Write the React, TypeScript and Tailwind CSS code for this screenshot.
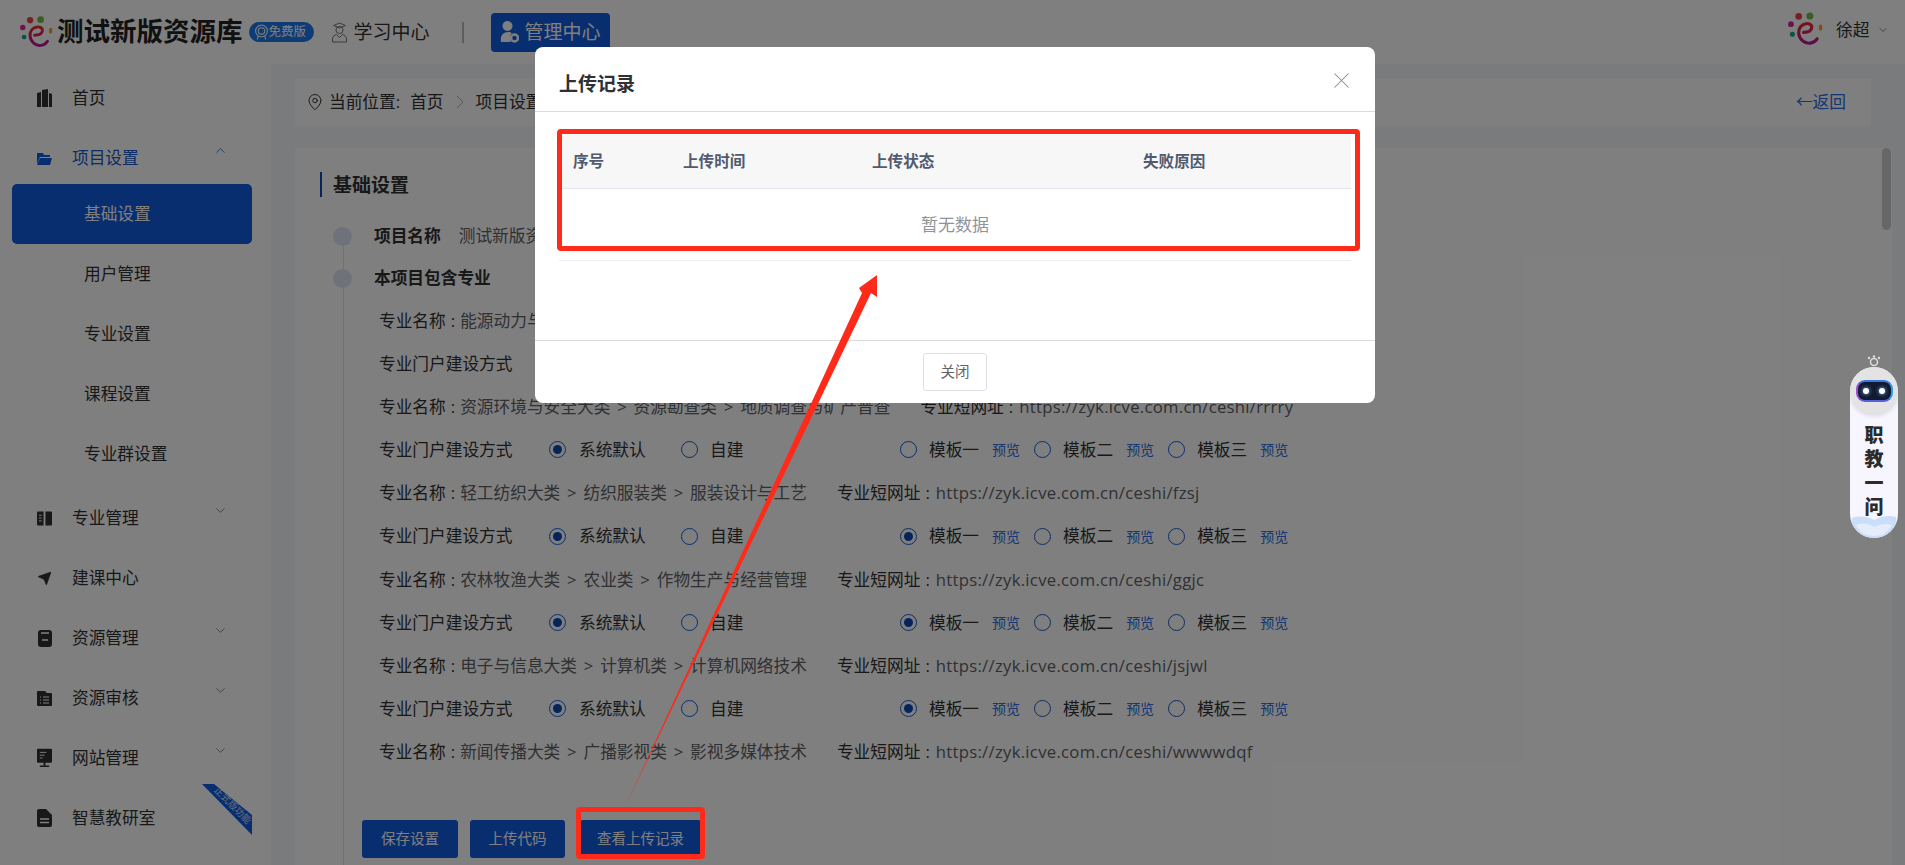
import React from 'react';
import { ChevronDown, ChevronUp, ChevronRight, MapPin, X, Send } from 'lucide-react';

const FONT = "font-['Open_Sans','Noto_Sans_CJK_SC',sans-serif]";

function Logo({ size }: { size: number }) {
    return (
        <svg width={size} height={size} viewBox="0 0 36 36" className="shrink-0">
            <defs>
                <linearGradient id="swirl" x1="0" y1="0" x2="0" y2="1">
                    <stop offset="0" stopColor="#f0282d" />
                    <stop offset="1" stopColor="#b5189a" />
                </linearGradient>
            </defs>
            <circle cx="11" cy="4.500" r="3.400" fill="#e8433f" />
            <circle cx="22.500" cy="4" r="3.600" fill="#7ab648" />
            <circle cx="3" cy="12.500" r="3" fill="#d92b8a" />
            <circle cx="4.500" cy="23" r="2.600" fill="#12a98c" />
            <ellipse cx="33.500" cy="16" rx="1.800" ry="3.200" fill="#f0a01e" />
            <path d="M16 21c4 0 8-1.500 8.500-5 .3-3-3-4.500-6-4-5 .8-8 5-7.500 10 .6 6 6 11 12 10 3-.5 5.500-2 7-4.500" stroke="url(#swirl)" strokeWidth="3.200" fill="none" strokeLinecap="round" />
        </svg>
    );
}

function SideItem({ icon, label, open, active }: { icon: React.ReactNode, label: string, open?: boolean, active?: boolean }) {
    return (
        <div className="relative flex items-center h-[60px] pl-[37px] shrink-0">
            <span className={`w-[15px] flex justify-center ${active ? 'text-[#105ce0]' : 'text-[#303133]'}`}>{icon}</span>
            <span className={`ml-[20px] text-[16.7px] ${active ? 'text-[#1a57c8]' : 'text-[#303133]'}`}>{label}</span>
            {open === true && <ChevronUp className="absolute left-[213px] top-[15px] w-[15px] h-[15px] text-[#1a57c8]" strokeWidth={1.2} />}
            {open === false && <ChevronDown className="absolute left-[213px] top-[15px] w-[15px] h-[15px] text-[#606266]" strokeWidth={1.2} />}
        </div>
    );
}

function SubItem({ label, active }: { label: string, active?: boolean }) {
    return (
        <div className={`h-[60px] mx-[12px] w-[240px] rounded-[5px] flex items-center pl-[72px] text-[16.7px] shrink-0 ${active ? 'bg-[#105ce0] text-white' : 'text-[#303133]'}`}>
            {label}
        </div>
    );
}

function Radio({ on }: { on?: boolean }) {
    return (
        <span className={`w-[17px] h-[17px] rounded-full border border-[#155bd4] flex items-center justify-center shrink-0 ${on ? 'border-[#1a6fd8]' : ''}`}>
            {on && <span className="w-[9px] h-[9px] rounded-full bg-[#0a48b8]" />}
        </span>
    );
}

function NameRow({ path, url }: { path: string, url: string }) {
    return (
        <div className="h-[43.1px] flex items-center pl-[379px] text-[16.7px] whitespace-nowrap shrink-0">
            <span className="text-[#303133]">专业名称</span>
            <span className="text-[#303133] ml-[5px] mr-[5px]">:</span>
            <span className="text-[#606266] [word-spacing:2.5px]">{path}</span>
            <span className="text-[#303133] ml-[30px]">专业短网址</span>
            <span className="text-[#303133] ml-[5px] mr-[6px]">:</span>
            <span className="text-[#606266] tracking-[0.28px]">{url}</span>
        </div>
    );
}

function TemplateOption({ label, on, first }: { label: string, on?: boolean, first?: boolean }) {
    return (
        <div className={`flex items-center ${first ? '' : 'ml-[14px]'}`}>
            <Radio on={on} />
            <span className="ml-[12px] text-[#303133]">{label}</span>
            <span className="ml-[13px] text-[14px] text-[#2a6de0]">预览</span>
        </div>
    );
}

function DoorRow({ tpl }: { tpl?: boolean }) {
    return (
        <div className="h-[43.1px] flex items-center pl-[379px] text-[16.7px] text-[#303133] whitespace-nowrap shrink-0">
            <span className="w-[170px]">专业门户建设方式</span>
            <div className="flex items-center w-[132px]">
                <Radio on />
                <span className="ml-[13px]">系统默认</span>
            </div>
            <div className="flex items-center w-[219px]">
                <Radio />
                <span className="ml-[12px]">自建</span>
            </div>
            <TemplateOption label="模板一" on={tpl} first />
            <TemplateOption label="模板二" />
            <TemplateOption label="模板三" />
        </div>
    );
}

function Mascot() {
    return (
        <div className="absolute left-[1850px] top-[355px] w-[48px] h-[183px] z-30">
            <svg width="16" height="12" viewBox="0 0 16 12" className="absolute left-[16px] top-0">
                <circle cx="8" cy="7" r="3.500" fill="none" stroke="#ddd" strokeWidth="1.500" />
                <circle cx="3" cy="3" r="1.200" fill="#ddd" />
                <circle cx="8" cy="1.500" r="1.200" fill="#ddd" />
                <circle cx="13" cy="3" r="1.200" fill="#ddd" />
            </svg>
            <div className="absolute left-0 top-[12px] w-[48px] h-[171px] rounded-full bg-[#f7f6fe] overflow-hidden flex flex-col items-center">
                <div className="w-[48px] h-[47px] rounded-full bg-[#e3e3e3] flex items-center justify-center shrink-0 shadow-[0_2px_4px_rgba(0,0,0,0.12)]">
                    <div className="w-[37px] h-[22px] rounded-[9px] bg-[#101a30] border-2 border-l-[#9b4fd0] border-r-[#2d9be0] border-t-[#3a78e0] border-b-[#5a60d8] flex items-center justify-center gap-[10px]">
                        <span className="w-[6px] h-[6px] rounded-full bg-white shadow-[0_0_4px_#9cc8ff]" />
                        <span className="w-[6px] h-[6px] rounded-full bg-white shadow-[0_0_4px_#9cc8ff]" />
                    </div>
                </div>
                <div className="flex flex-col items-center text-[19px] font-black text-[#2b2b2b] leading-[24px] mt-[9px] relative z-10">
                    <span>职</span>
                    <span>教</span>
                    <span>一</span>
                    <span>问</span>
                </div>
                <svg width="48" height="26" viewBox="0 0 48 26" className="absolute left-0 bottom-0">
                    <path d="M2 6c8-3 16-1 22 2 7-4 14-5 22-3 1 8-3 21-22 21S1 14 2 6z" fill="#c9def9" />
                    <path d="M6 13c8-3 13-1 18 2 6-3 12-4 18-2-4 8-10 11-18 11S10 21 6 13z" fill="#e5ecfc" />
                </svg>
            </div>
        </div>
    );
}

export default function App() {
    return (
        <div className={`relative w-[1905px] h-[865px] overflow-hidden bg-[#f4f6f9] ${FONT}`}>
            {/* top bar */}
            <div className="h-[64px] bg-white flex items-center pl-[20px] relative">
                <Logo size={33} />
                <span className="ml-[4px] text-[26.5px] font-bold text-[#222] whitespace-nowrap">测试新版资源库</span>
                <span className="ml-[6px] w-[65px] h-[20px] rounded-full bg-[#1f78e8] flex items-center pl-[5px] text-white whitespace-nowrap">
                    <svg width="15" height="18" viewBox="0 0 14 16" fill="none" stroke="white" strokeWidth="1"><circle cx="7" cy="7" r="5.500" /><circle cx="7" cy="7" r="3" /><path d="M4 12l-1 3M10 12l1 3" /></svg>
                    <span className="text-[12.5px]">免费版</span>
                </span>
                <svg width="17" height="21" viewBox="0 0 17 21" fill="none" stroke="#777" strokeWidth="1" className="ml-[17px]">
                    <path d="M8.500 1l6 2.500-6 2.500-6-2.500z" />
                    <circle cx="8.500" cy="8" r="3.600" />
                    <path d="M1.500 20v-3c0-2.500 2-4 4-4.500l3 3 3-3c2 .5 4 2 4 4.500v3z" />
                </svg>
                <span className="ml-[6px] text-[19px] text-[#333]">学习中心</span>
                <span className="ml-[32px] w-[2px] h-[21px] bg-[#bbb]" />
                <div className="ml-[27px] w-[119px] h-[39px] rounded-[4px] bg-[#105ce0] flex items-center pl-[9px] text-[19px] text-white whitespace-nowrap">
                    <svg width="19" height="24" viewBox="0 0 19 24" fill="white">
                        <circle cx="7.500" cy="6" r="5" />
                        <path d="M1 22c-1-6 2-10 7-10 1.500 0 3 .5 4 1-2 2-3 5-1 9z" />
                        <circle cx="14.500" cy="18" r="3.500" fill="none" stroke="white" strokeWidth="2.500" />
                    </svg>
                    <span className="ml-[6px]">管理中心</span>
                </div>
                <div className="absolute left-[1788px] top-[12px] flex items-center">
                    <Logo size={35} />
                    <span className="ml-[13px] text-[16.7px] text-[#303133]">徐超</span>
                    <ChevronDown className="ml-[8px] w-[12px] h-[12px] text-[#606266]" strokeWidth={1.5} />
                </div>
            </div>

            <div className="flex h-[801px]">
                {/* left menu */}
                <div className="w-[271px] bg-white shrink-0 flex flex-col overflow-hidden">
                    <div className="h-[4px] shrink-0" />
                    <SideItem
                        label="首页"
                        icon={<svg width="15" height="18" viewBox="0 0 15 18" fill="currentColor"><path d="M0 4l4-1v15H0zM5 1l6-1v18H5zM12 4l3 1v13h-3z" /></svg>}
                    />
                    <SideItem
                        label="项目设置"
                        open={true}
                        active
                        icon={<svg width="15" height="13" viewBox="0 0 15 13" fill="currentColor"><path d="M0 1h6l1 2h6v2H3L0 12zM3 6h12l-2 7H0z" /></svg>}
                    />
                    <div className="-mt-[4px] mb-[4px] flex flex-col shrink-0">
                        <SubItem label="基础设置" active />
                        <SubItem label="用户管理" />
                        <SubItem label="专业设置" />
                        <SubItem label="课程设置" />
                        <SubItem label="专业群设置" />
                    </div>
                    <SideItem
                        label="专业管理"
                        open={false}
                        icon={
                            <svg width="16" height="17" viewBox="0 0 16 17">
                                <path d="M1 1h6v15H1a1 1 0 01-1-1V2a1 1 0 011-1zM9 1h6a1 1 0 011 1v13a1 1 0 01-1 1H9z" fill="currentColor" />
                                <path d="M2 5h3M2 8h3M2 11h3" stroke="#fff" strokeWidth="1" />
                            </svg>
                        }
                    />
                    <SideItem label="建课中心" icon={<Send className="w-[19px] h-[19px] fill-current" strokeWidth={1} />} />
                    <SideItem
                        label="资源管理"
                        open={false}
                        icon={
                            <svg width="14" height="17" viewBox="0 0 14 17">
                                <path d="M3 0h8a3 3 0 013 3v11a3 3 0 01-3 3H3a3 3 0 01-3-3V3a3 3 0 013-3z" fill="currentColor" />
                                <path d="M3 3h8M4 10h6" stroke="#fff" strokeWidth="1.500" />
                            </svg>
                        }
                    />
                    <SideItem
                        label="资源审核"
                        open={false}
                        icon={
                            <svg width="15" height="15" viewBox="0 0 15 15">
                                <path d="M1 0h7l2 2h4a1 1 0 011 1v11a1 1 0 01-1 1H1a1 1 0 01-1-1V1a1 1 0 011-1z" fill="currentColor" />
                                <path d="M3 6h1M6 6h6M3 9h1M6 9h6M3 12h1M6 12h6" stroke="#fff" strokeWidth="1" />
                            </svg>
                        }
                    />
                    <SideItem
                        label="网站管理"
                        open={false}
                        icon={
                            <svg width="16" height="20" viewBox="0 0 16 20">
                                <path d="M1 0h14a1 1 0 011 1v13a1 1 0 01-1 1H1a1 1 0 01-1-1V1a1 1 0 011-1zM7 15h2v3h4v1.500H3V18h4z" fill="currentColor" />
                                <path d="M3 4h7M3 7h5M3 10h3" stroke="#fff" strokeWidth="1" />
                            </svg>
                        }
                    />
                    <SideItem
                        label="智慧教研室"
                        icon={
                            <svg width="15" height="18" viewBox="0 0 15 18">
                                <path d="M2 0h7l6 6v10a2 2 0 01-2 2H2a2 2 0 01-2-2V2a2 2 0 012-2z" fill="currentColor" />
                                <path d="M3 10h9M3 13.500h9" stroke="#fff" strokeWidth="1.500" />
                            </svg>
                        }
                    />
                </div>

                {/* right side */}
                <div className="flex-1 pl-[24px] pr-[34px] pt-[14px] flex flex-col">
                    <div className="h-[48px] bg-white rounded-[2px] flex items-center pl-[11px] text-[16.7px] text-[#303133] whitespace-nowrap shrink-0 relative">
                        <MapPin className="w-[18px] h-[20px]" strokeWidth={1.3} />
                        <span className="ml-[5px]">当前位置:</span>
                        <span className="ml-[10px]">首页</span>
                        <ChevronRight className="ml-[4px] w-[24px] h-[24px] text-[#999]" strokeWidth={0.8} />
                        <span className="ml-[4px]">项目设置</span>
                        <span className="ml-auto mr-[25px] text-[#2a6de0] font-['Noto_Sans_CJK_SC',sans-serif]">←返回</span>
                    </div>
                    <div className="mt-[22px] -mr-[21px] flex-1 bg-white rounded-t-[2px] relative min-h-0">
                        <div className="absolute left-[25px] top-[24px] h-[25px] w-[2px] bg-[#0a48b8]" />
                        <div className="pl-[38px] pt-[24px] text-[19px] font-bold text-[#303133] leading-[27px]">基础设置</div>
                    </div>
                </div>
            </div>

            {/* page content of the settings card */}
            <div className="absolute left-0 top-[215px] w-[1905px]">
                <div className="h-[42px] flex items-center pl-[333px] text-[16.7px]">
                    <span className="w-[19px] h-[19px] rounded-full bg-[#dce7f7]" />
                    <span className="ml-[22px] font-bold text-[#303133]">项目名称</span>
                    <span className="ml-[18px] text-[#606266]">测试新版资源库</span>
                </div>
                <div className="h-[42px] flex items-center pl-[333px] text-[16.7px]">
                    <span className="w-[19px] h-[19px] rounded-full bg-[#dce7f7]" />
                    <span className="ml-[22px] font-bold text-[#303133]">本项目包含专业</span>
                </div>
                <NameRow path="能源动力与材料大类 > 电力技术类 > 发电厂及电力系统" url="https://zyk.icve.com.cn/ceshi/ndcl" />
                <DoorRow tpl />
                <NameRow path="资源环境与安全大类 > 资源勘查类 > 地质调查与矿产普查" url="https://zyk.icve.com.cn/ceshi/rrrry" />
                <DoorRow />
                <NameRow path="轻工纺织大类 > 纺织服装类 > 服装设计与工艺" url="https://zyk.icve.com.cn/ceshi/fzsj" />
                <DoorRow tpl />
                <NameRow path="农林牧渔大类 > 农业类 > 作物生产与经营管理" url="https://zyk.icve.com.cn/ceshi/ggjc" />
                <DoorRow tpl />
                <NameRow path="电子与信息大类 > 计算机类 > 计算机网络技术" url="https://zyk.icve.com.cn/ceshi/jsjwl" />
                <DoorRow tpl />
                <NameRow path="新闻传播大类 > 广播影视类 > 影视多媒体技术" url="https://zyk.icve.com.cn/ceshi/wwwwdqf" />
                <div className="flex items-center pl-[362px] mt-[47px] text-[14.5px] text-white">
                    <div className="w-[96px] h-[38px] rounded-[3px] bg-[#105ce0] flex items-center justify-center">保存设置</div>
                    <div className="ml-[12px] w-[95px] h-[38px] rounded-[3px] bg-[#105ce0] flex items-center justify-center">上传代码</div>
                    <div className="ml-[15px] w-[121px] h-[38px] rounded-[3px] bg-[#105ce0] flex items-center justify-center">查看上传记录</div>
                </div>
            </div>
            <div className="absolute left-[343px] top-[240px] w-[1px] h-[625px] bg-[#dce7f7]" />

            {/* ribbon on the last menu item */}
            <div className="absolute left-[202px] top-[784px] w-[50px] h-[51px]">
                <svg width="50" height="51" viewBox="0 0 50 51" className="absolute inset-0">
                    <polygon points="0,0 12,0 50,31 50,51" fill="#105ce0" />
                </svg>
                <span className="absolute left-[7px] top-[14px] w-[46px] text-[9.5px] leading-[14px] text-white/80 whitespace-nowrap rotate-[45deg]">正式版功能</span>
            </div>

            {/* scrollbar */}
            <div className="absolute left-[1882px] top-[148px] w-[9px] h-[82px] rounded-full bg-[#cfcfcf]" />

            {/* dim layer */}
            <div className="absolute inset-0 bg-black/50 z-10" />

            <Mascot />

            {/* upload records dialog */}
            <div className="absolute left-[535px] top-[47px] w-[840px] h-[356px] bg-white rounded-[8px] z-20 flex flex-col">
                <div className="h-[65px] border-b border-[#dcdcdc] flex items-center justify-between pt-[10px] pl-[24px] pr-[20px] shrink-0">
                    <span className="text-[19px] font-bold text-[#303133]">上传记录</span>
                    <X className="w-[27px] h-[27px] text-[#8c8c8c] mb-[8px]" strokeWidth={0.9} />
                </div>
                <div className="flex-1 px-[24px] pt-[23px]">
                    <div className="border-b border-[#ebeef5] h-[126px]">
                        <div className="h-[54px] bg-[#f7f7f7] border-b border-[#e4e7ed] flex items-center text-[15.6px] font-bold text-[#515a6e]">
                            <span className="ml-[14px] w-[110px]">序号</span>
                            <span className="w-[189px]">上传时间</span>
                            <span className="w-[271px]">上传状态</span>
                            <span>失败原因</span>
                        </div>
                        <div className="h-[71px] flex items-center justify-center text-[17px] text-[#909399]">暂无数据</div>
                    </div>
                </div>
                <div className="h-[63px] border-t border-[#dcdcdc] flex items-center justify-center shrink-0">
                    <div className="w-[64px] h-[38px] border border-[#dcdfe6] rounded-[3px] flex items-center justify-center text-[14.5px] text-[#606266]">关闭</div>
                </div>
            </div>

            {/* annotation drawn on the screenshot */}
            <div className="absolute left-[557px] top-[129px] w-[803px] h-[122px] border-[5px] border-[#ff2a1a] rounded-[4px] z-30" />
            <div className="absolute left-[576px] top-[807px] w-[129px] h-[52px] border-[5px] border-[#ff2a1a] rounded-[4px] z-30" />
            <svg width="1905" height="865" viewBox="0 0 1905 865" className="absolute left-0 top-0 z-30 pointer-events-none">
                <polygon points="625,807 862,293 859,288 877,275 877,297 871,293" fill="#ff2a1a" />
            </svg>
        </div>
    );
}
